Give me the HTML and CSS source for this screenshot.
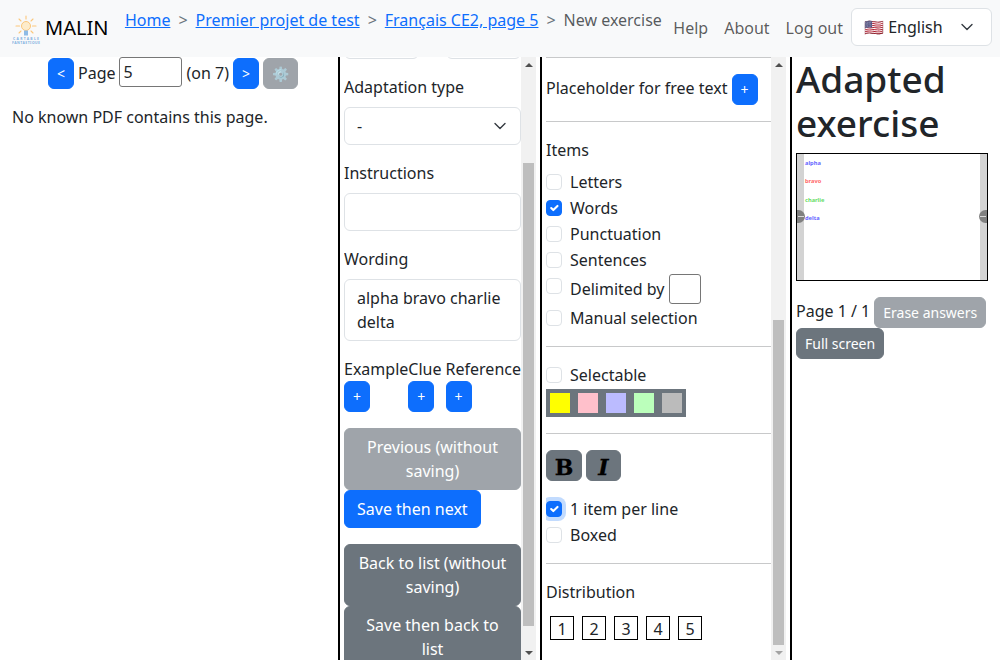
FILE: index.html
```html
<!DOCTYPE html>
<html>
<head>
  <meta charset="utf-8">
  <title>MALIN</title>
  <link rel="stylesheet" href="styles.css">
</head>
<body>

<div id="navbar">
  <div id="brand">
    <svg id="logo" width="29" height="32" viewBox="0 0 29 32">
      <g stroke="#fbc77a" stroke-width="1.1" stroke-linecap="round">
        <line x1="14" y1="4" x2="14" y2="7"/>
        <line x1="7" y1="7" x2="9" y2="9"/>
        <line x1="21" y1="7" x2="19" y2="9"/>
        <line x1="4" y1="14" x2="7.5" y2="14"/>
        <line x1="20.5" y1="14" x2="24" y2="14"/>
        <line x1="7" y1="21" x2="9" y2="19"/>
        <line x1="21" y1="21" x2="19" y2="19"/>
      </g>
      <circle cx="14" cy="14" r="4.5" fill="#fdeccb" stroke="#fbc77a"/>
      <rect x="12" y="18.5" width="4" height="5" fill="#8dbbe6"/>
      <text class="logo-text" x="14" y="28" textLength="26">CARTABLE</text>
      <text class="logo-text" x="14" y="31.5" textLength="28">FANTASTIQUE</text>
    </svg>
    <span id="brand_name">MALIN</span>
  </div>
  <div id="breadcrumb">
    <a href="#">Home</a><span class="sep">&gt;</span><a href="#">Premier projet de test</a><span class="sep">&gt;</span><a href="#">Français CE2, page 5</a><span class="sep">&gt;</span><span class="current">New exercise</span>
  </div>
  <div id="nav_links">
    <span class="nav-link">Help</span>
    <span class="nav-link">About</span>
    <span class="nav-link">Log out</span>
  </div>
  <div class="select lang-select"><span>🇺🇸 English</span><svg class="chevron" width="16" height="16" viewBox="0 0 16 16"><path d="M3 5.5l5 5 5-5" fill="none" stroke="#343a40" stroke-width="1.4" stroke-linecap="round" stroke-linejoin="round"/></svg></div>
</div>

<div id="main">

  <div id="pdf_panel" class="panel">
    <div id="pager">
      <button class="btn btn-sm btn-primary">&lt;</button>
      <span>Page</span>
      <input id="page_number" type="text" value="5">
      <span>(on 7)</span>
      <button class="btn btn-sm btn-primary">&gt;</button>
      <button class="btn btn-sm btn-secondary disabled">⚙️</button>
    </div>
    <p id="no_pdf">No known PDF contains this page.</p>
  </div>

  <div class="panel scroll-panel">
    <div id="fields_scroller" class="scroller">
      <div id="top_fields">
        <input class="form-control" type="text">
        <input class="form-control" type="text">
      </div>

      <div class="label">Adaptation type</div>
      <div class="select field"><span>-</span><svg class="chevron" width="16" height="16" viewBox="0 0 16 16"><path d="M3 5.5l5 5 5-5" fill="none" stroke="#343a40" stroke-width="1.4" stroke-linecap="round" stroke-linejoin="round"/></svg></div>

      <div class="label">Instructions</div>
      <div class="form-control field instructions"></div>

      <div class="label">Wording</div>
      <div class="form-control field">alpha bravo charlie delta</div>

      <div id="extras">
        <div><div>Example</div><button class="btn btn-sm btn-primary">+</button></div>
        <div><div>Clue</div><button class="btn btn-sm btn-primary">+</button></div>
        <div class="extra-last"><div>Reference</div><button class="btn btn-sm btn-primary">+</button></div>
      </div>

      <button class="btn btn-secondary disabled wide">Previous (without saving)</button>
      <button class="btn btn-primary">Save then next</button>
      <div class="actions-gap"></div>
      <button class="btn btn-secondary wide">Back to list (without saving)</button>
      <button class="btn btn-secondary wide">Save then back to list</button>
      <div class="actions-gap"></div>
    </div>
    <div class="scrollbar">
      <span class="arrow arrow-up"></span>
      <span id="fields_thumb" class="thumb"></span>
      <span class="arrow arrow-down"></span>
    </div>
  </div>

  <div class="panel scroll-panel">
    <div class="scroller">
      <hr class="first">
      <div id="placeholder_row"><span>Placeholder for free text</span><button class="btn btn-sm btn-primary">+</button></div>
      <hr>

      <div class="label">Items</div>
      <label class="check"><input type="checkbox">Letters</label>
      <label class="check"><input type="checkbox" checked>Words</label>
      <label class="check"><input type="checkbox">Punctuation</label>
      <label class="check"><input type="checkbox">Sentences</label>
      <label class="check"><input type="checkbox"><span class="delimited">Delimited by<input id="delimiter" type="text"></span></label>
      <label class="check last"><input type="checkbox">Manual selection</label>
      <hr>

      <label class="check"><input type="checkbox">Selectable</label>
      <div id="swatches">
        <span class="swatch swatch-yellow"></span>
        <span class="swatch swatch-pink"></span>
        <span class="swatch swatch-blue"></span>
        <span class="swatch swatch-green"></span>
        <span class="swatch swatch-grey"></span>
      </div>
      <hr>

      <div id="font_buttons">
        <button class="btn btn-sm btn-secondary font-btn">B</button>
        <button class="btn btn-sm btn-secondary font-btn italic">I</button>
      </div>
      <label class="check"><input id="per_line" type="checkbox" checked>1 item per line</label>
      <label class="check last"><input type="checkbox">Boxed</label>
      <hr>

      <div class="label">Distribution</div>
      <div id="distribution">
        <span class="dist-box">1</span>
        <span class="dist-box">2</span>
        <span class="dist-box">3</span>
        <span class="dist-box">4</span>
        <span class="dist-box">5</span>
      </div>
    </div>
    <div class="scrollbar">
      <span class="arrow arrow-up"></span>
      <span id="style_thumb" class="thumb"></span>
      <span class="arrow arrow-down arrow-off"></span>
    </div>
  </div>

  <div id="preview_panel" class="panel">
    <h1>Adapted exercise</h1>
    <div id="preview">
      <div class="preview-bar"></div>
      <div id="preview_text">
        <span class="word-blue">alpha</span>
        <span class="word-red">bravo</span>
        <span class="word-green">charlie</span>
        <span class="word-blue">delta</span>
      </div>
      <div class="preview-bar"></div>
      <span class="handle handle-left"></span>
      <span class="handle handle-right"></span>
    </div>
    <div id="preview_controls">
      <span class="page-count">Page 1 / 1</span>
      <button class="btn btn-sm btn-secondary disabled">Erase answers</button>
      <button class="btn btn-sm btn-secondary">Full screen</button>
    </div>
  </div>

</div>

<script src="script.js"></script>
</body>
</html>
```

FILE: styles.css
```css
* {
  box-sizing: border-box;
}
body {
  margin: 0;
  height: 100vh;
  overflow: hidden;
  display: flex;
  flex-direction: column;
  font-family: "Noto Sans", sans-serif;
  font-size: 16px;
  line-height: 24px;
  color: #212529;
  background: white;
}

/* top bar */
#navbar {
  flex: none;
  height: 57px;
  display: flex;
  align-items: flex-start;
  padding: 8px 8px 0 12px;
  background: #f8f9fa;
}
#brand {
  display: flex;
  align-items: center;
  height: 40px;
  margin-right: 16.5px;
}
#logo {
  margin-right: 4px;
}
.logo-text {
  font-family: "Noto Sans", sans-serif;
  font-size: 3.4px;
  font-weight: bold;
  fill: #7fb0e0;
  text-anchor: middle;
}
#brand_name {
  font-size: 20px;
  color: black;
}
#breadcrumb {
  flex: 1;
  white-space: nowrap;
}
#breadcrumb a {
  color: #0d6efd;
}
.sep {
  padding: 0 8px;
  color: #6c757d;
}
.current {
  color: rgba(33, 37, 41, 0.75);
}
#nav_links {
  display: flex;
}
.nav-link {
  padding: 8px;
  color: rgba(0, 0, 0, 0.65);
}
.select {
  display: flex;
  align-items: center;
  justify-content: space-between;
  height: 38px;
  padding: 0 12px;
  background: white;
  border: 1px solid #dee2e6;
  border-radius: 6px;
}
.lang-select {
  width: 141px;
  padding-right: 16px;
}

/* columns */
#main {
  flex: 1;
  min-height: 0;
  display: flex;
}
.panel {
  border-left: 2px solid black;
  min-height: 0;
}
#pdf_panel {
  width: 338px;
  border-left: 0;
}
.scroll-panel {
  display: flex;
  padding: 0 4px;
}
.scroll-panel:nth-child(2) {
  width: 202px;
}
.scroll-panel:nth-child(3) {
  width: 250px;
}
#preview_panel {
  flex: 1;
  padding: 0 4px;
}
.scroller {
  flex: 1;
  min-width: 0;
  overflow: hidden;
}

/* scrollbars */
.scrollbar {
  flex: none;
  width: 15px;
  display: flex;
  flex-direction: column;
  align-items: center;
  background: #f1f1f1;
}
.arrow {
  flex: none;
  width: 0;
  height: 0;
  border-left: 4px solid transparent;
  border-right: 4px solid transparent;
}
.arrow-up {
  margin: 6px 0 5px;
  border-bottom: 4px solid #505050;
}
.arrow-down {
  margin: auto 0 5px;
  border-top: 4px solid #505050;
}
.arrow-off {
  border-top-color: #a3a3a3;
}
.thumb {
  flex: none;
  width: 11px;
  background: #bebebe;
}
#fields_thumb {
  margin-top: 91px;
  height: 463px;
}
#style_thumb {
  margin-top: 248px;
  height: 325px;
}

/* buttons */
.btn {
  display: inline-block;
  padding: 6px 12px;
  font: inherit;
  line-height: 24px;
  color: white;
  text-align: center;
  border: 1px solid transparent;
  border-radius: 6px;
}
.btn-sm {
  padding: 4px 8px;
  font-size: 14px;
  line-height: 21px;
}
.btn-primary {
  background: #0d6efd;
  border-color: #0d6efd;
}
.btn-secondary {
  background: #6c757d;
  border-color: #6c757d;
}
.disabled {
  opacity: 0.65;
}
.wide {
  display: block;
  width: 100%;
}

/* pdf column */
#pager {
  display: flex;
  justify-content: center;
  align-items: flex-start;
  gap: 4px;
  margin-top: 1px;
  padding-left: 8px;
  height: 31px;
}
#pager span {
  margin-top: 3px;
}
#page_number {
  width: 63px;
  height: 30px;
  margin: -1px 1px 0 -1px;
  padding: 1px 4px;
  font: inherit;
  color: #212529;
  border: 1px solid #767676;
  border-radius: 3px;
}
#no_pdf {
  margin: 16px 0 0 12px;
}

/* fields column */
#top_fields {
  display: flex;
  justify-content: space-between;
  height: 120px;
  align-items: flex-end;
  margin-bottom: 16px;
}
#top_fields .form-control {
  width: 75px;
  height: 38px;
}
.label {
  margin-bottom: 8px;
}
.form-control {
  padding: 6px 12px;
  font: inherit;
  line-height: 24px;
  background: white;
  border: 1px solid #dee2e6;
  border-radius: 6px;
}
.field {
  margin-bottom: 16px;
}
.instructions {
  height: 38px;
}
#extras {
  display: flex;
  margin-bottom: 16px;
}
#extras > div {
  display: flex;
  flex-direction: column;
  align-items: flex-start;
}
#extras > .extra-last {
  margin-left: auto;
}
.actions-gap {
  height: 16px;
}

/* style column */
hr {
  margin: 16px 0;
  border: 0;
  border-top: 1px solid #c8c9ca;
}
hr.first {
  margin-top: 0;
}
#placeholder_row {
  display: flex;
  align-items: flex-start;
  gap: 4px;
}
#placeholder_row span {
  margin-top: 2px;
}
.check {
  display: flex;
  align-items: flex-start;
  min-height: 24px;
  margin-bottom: 2px;
}
.check.last {
  margin-bottom: 0;
}
.check input[type=checkbox] {
  flex: none;
  appearance: none;
  width: 16px;
  height: 16px;
  margin: 4px 8px 0 0;
  background: white;
  border: 1px solid #dee2e6;
  border-radius: 4px;
}
.check input[type=checkbox]:checked {
  background: #0d6efd url("data:image/svg+xml,%3csvg xmlns='http://www.w3.org/2000/svg' viewBox='0 0 20 20'%3e%3cpath fill='none' stroke='%23fff' stroke-linecap='round' stroke-linejoin='round' stroke-width='3' d='m6 10 3 3 6-6'/%3e%3c/svg%3e") center / 100% no-repeat;
  border-color: #0d6efd;
}
#per_line {
  box-shadow: 0 0 0 4px rgba(13, 110, 253, 0.25);
}
.delimited {
  display: flex;
  align-items: center;
  gap: 4px;
}
#delimiter {
  width: 32px;
  height: 30px;
  padding: 1px 2px;
  border: 1px solid #767676;
  border-radius: 3px;
}
#swatches {
  display: flex;
  width: 140px;
  gap: 8px;
  padding: 4px;
  background: #6c757d;
}
.swatch {
  width: 20px;
  height: 20px;
}
.swatch-yellow { background: #ffff00; }
.swatch-pink { background: #ffc0cb; }
.swatch-blue { background: #bbbbff; }
.swatch-green { background: #bbffbb; }
.swatch-grey { background: #bbbbbb; }
#font_buttons {
  display: flex;
  gap: 4px;
  margin-bottom: 16px;
}
.font-btn {
  width: 36px;
  height: 31px;
  padding: 3px 0 0;
  font-family: "DejaVu Serif", serif;
  font-size: 22px;
  font-weight: bold;
  line-height: 26px;
  color: black;
  -webkit-text-stroke: 0.3px black;
}
.font-btn.italic {
  width: 35px;
  font-style: italic;
}
#distribution {
  display: flex;
  gap: 8px;
  padding: 4px;
}
.dist-box {
  width: 24px;
  height: 24px;
  line-height: 24px;
  text-align: center;
  border: 1px solid black;
}

/* preview column */
h1 {
  margin: 0 0 8px;
  font-size: 37px;
  font-weight: 500;
  line-height: 44px;
}
#preview {
  position: relative;
  display: flex;
  width: 192px;
  height: 128px;
  border: 1px solid black;
}
.preview-bar {
  flex: none;
  width: 7px;
  background: #d3d3d3;
}
#preview_text {
  flex: 1;
  display: flex;
  flex-direction: column;
  gap: 10.3px;
  padding: 5px 1px;
  font-size: 5.7px;
  font-weight: bold;
  line-height: 8px;
}
.word-blue { color: #6666ff; }
.word-red { color: #ff6666; }
.word-green { color: #66dd66; }
.handle {
  position: absolute;
  top: 56px;
  width: 8px;
  height: 13px;
  background: #808080;
}
.handle::after {
  content: "";
  position: absolute;
  top: 6px;
  left: 1px;
  width: 6px;
  height: 1px;
  background: #d8d8d8;
}
.handle-left {
  left: 0;
  border-radius: 0 7px 7px 0;
}
.handle-right {
  right: 0;
  border-radius: 7px 0 0 7px;
}
#preview_controls {
  display: flex;
  flex-wrap: wrap;
  align-items: flex-start;
  column-gap: 4px;
  margin-top: 16px;
}
.page-count {
  margin-top: 2px;
}
```

FILE: script.js
```js
// the fields column is shown scrolled down
document.getElementById("fields_scroller").scrollTop = 118;
```
